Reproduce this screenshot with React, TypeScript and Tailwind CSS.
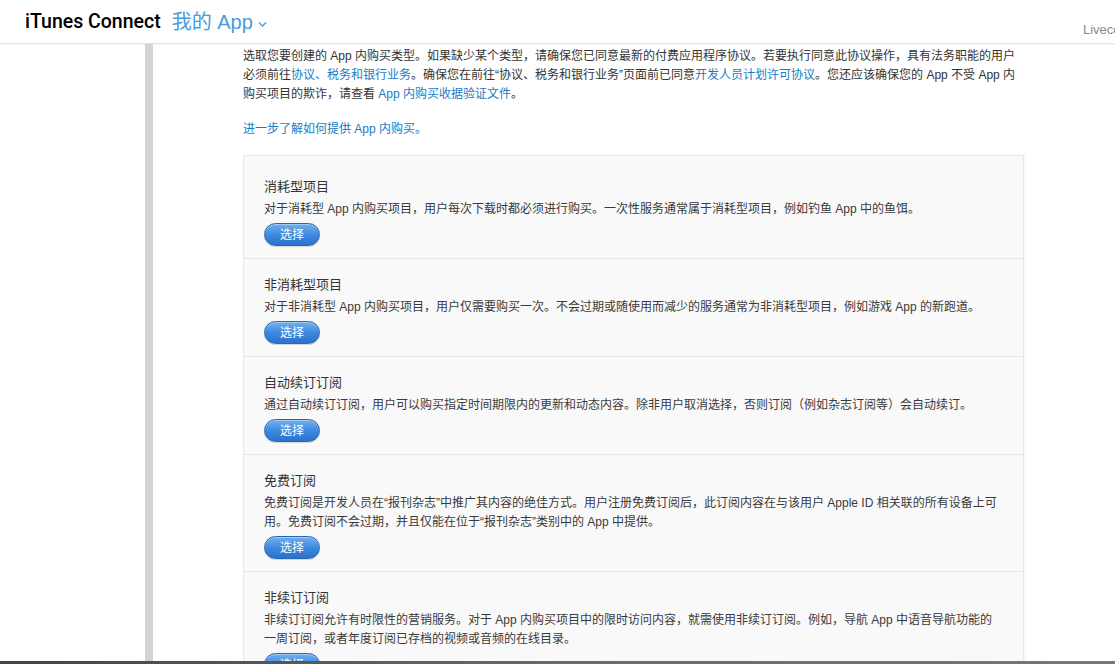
import React from "react";

const font = { fontFamily: '"Liberation Sans","Noto Sans CJK SC",sans-serif' };

function Btn() {
  return (
    <button className="mt-[4px] w-[56px] h-[23px] rounded-full border border-[#2a66b3] bg-gradient-to-b from-[#72b0ee] via-[#3f8ae0] to-[#2a72cc] text-white text-[12px] leading-none shadow-[0_1px_1px_rgba(0,0,0,0.15),inset_0_1px_0_rgba(255,255,255,0.35)]">
      选择
    </button>
  );
}

function Section({
  title,
  lines,
  first,
}: {
  title: string;
  lines: string[];
  first?: boolean;
}) {
  return (
    <div className={`px-[20px] ${first ? "pt-[21px]" : "pt-[16px] border-t border-[#e6e6e6]"} pb-[12px]`}>
      <div className="text-[13px] leading-[20px] text-[#333]">{title}</div>
      <div className="mt-[3px] text-[12px] leading-[19px] text-[#3a3a3a] whitespace-nowrap">
        {lines.map((l, i) => (
          <div key={i}>{l}</div>
        ))}
      </div>
      <Btn />
    </div>
  );
}

export default function App() {
  const link = "text-[#1a7ac4]";
  return (
    <div className="h-[664px] w-[1115px] overflow-hidden flex flex-col bg-white" style={font}>
      <header className="h-[44px] shrink-0 flex items-start border-b border-[#e2e2e2] shadow-[0_1px_2px_rgba(0,0,0,0.04)]">
        <div
          className="pl-[25px] pt-[9px] text-[19.5px] leading-[26px] font-medium text-black"
          style={{ fontFamily: 'Roboto,"Liberation Sans",sans-serif' }}
        >
          iTunes Connect
        </div>
        <div className="pl-[11px] pt-[9px] flex items-center text-[#4a9ae0] text-[20px] leading-[26px]">
          <span>我的 App</span>
          <svg width="11" height="8" viewBox="0 0 11 8" className="ml-[4px] mt-[3px]">
            <path d="M2 2.5 L5.5 6 L9 2.5" fill="none" stroke="#4a9ae0" strokeWidth="1.3" />
          </svg>
        </div>
        <div className="flex-1" />
        <div className="w-[32px] overflow-hidden whitespace-nowrap pt-[21px] text-[13px] leading-[18px] text-[#8a8a8a]">
          Livecoding
        </div>
      </header>
      <div className="flex-1 flex min-h-0">
        <div className="w-[145px] shrink-0" />
        <div className="w-[8px] shrink-0 bg-[#d3d3d3]" />
        <div className="pl-[90px] w-[871px] shrink-0">
          <div className="pt-[3px] text-[12px] leading-[19px] text-[#333] whitespace-nowrap">
            <div>选取您要创建的 App 内购买类型。如果缺少某个类型，请确保您已同意最新的付费应用程序协议。若要执行同意此协议操作，具有法务职能的用户</div>
            <div>
              必须前往<span className={link}>协议、税务和银行业务</span>。确保您在前往“协议、税务和银行业务”页面前已同意
              <span className={link}>开发人员计划许可协议</span>。您还应该确保您的 App 不受 App 内
            </div>
            <div>
              购买项目的欺诈，请查看 <span className={link}>App 内购买收据验证文件</span>。
            </div>
            <div className={`mt-[16px] ${link}`}>进一步了解如何提供 App 内购买。</div>
          </div>
          <div className="mt-[16px] w-[781px] bg-[#f9f9f9] border border-[#e9e9e9] shadow-[1px_0_2px_rgba(0,0,0,0.05)]">
            <Section
              first
              title="消耗型项目"
              lines={["对于消耗型 App 内购买项目，用户每次下载时都必须进行购买。一次性服务通常属于消耗型项目，例如钓鱼 App 中的鱼饵。"]}
            />
            <Section
              title="非消耗型项目"
              lines={["对于非消耗型 App 内购买项目，用户仅需要购买一次。不会过期或随使用而减少的服务通常为非消耗型项目，例如游戏 App 的新跑道。"]}
            />
            <Section
              title="自动续订订阅"
              lines={["通过自动续订订阅，用户可以购买指定时间期限内的更新和动态内容。除非用户取消选择，否则订阅（例如杂志订阅等）会自动续订。"]}
            />
            <Section
              title="免费订阅"
              lines={[
                "免费订阅是开发人员在“报刊杂志”中推广其内容的绝佳方式。用户注册免费订阅后，此订阅内容在与该用户 Apple ID 相关联的所有设备上可",
                "用。免费订阅不会过期，并且仅能在位于“报刊杂志”类别中的 App 中提供。",
              ]}
            />
            <Section
              title="非续订订阅"
              lines={[
                "非续订订阅允许有时限性的营销服务。对于 App 内购买项目中的限时访问内容，就需使用非续订订阅。例如，导航 App 中语音导航功能的",
                "一周订阅，或者年度订阅已存档的视频或音频的在线目录。",
              ]}
            />
          </div>
        </div>
      </div>
      <div className="h-[3px] shrink-0 bg-gradient-to-r from-[#444] via-[#6a6a6a] to-[#777]" />
    </div>
  );
}
